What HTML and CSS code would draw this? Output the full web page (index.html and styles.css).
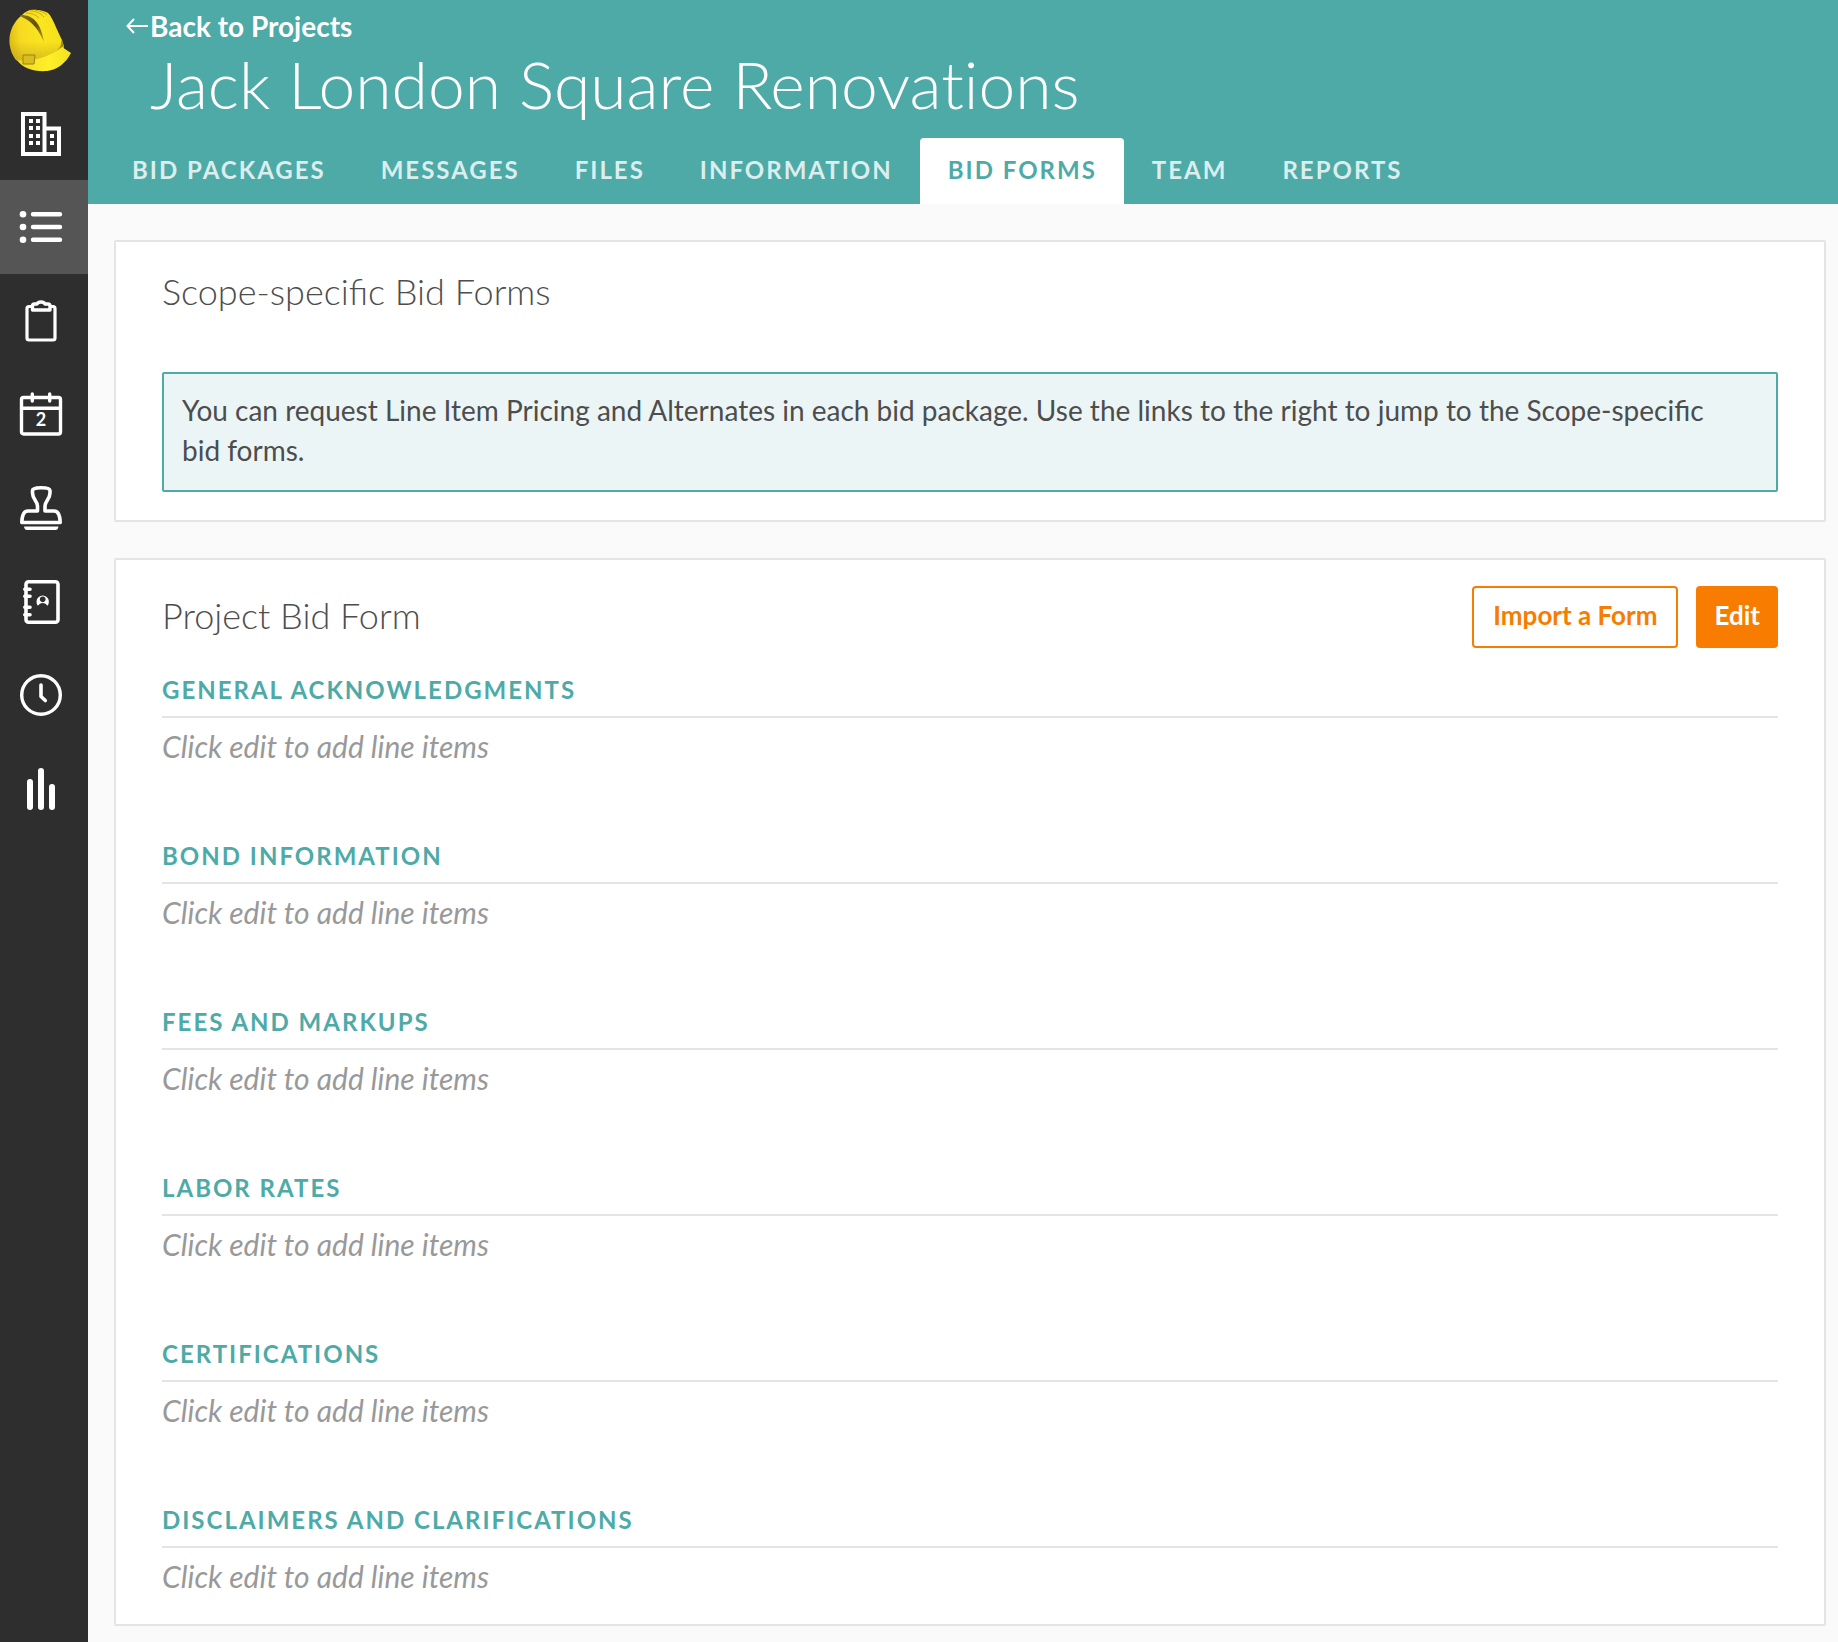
FILE: index.html
```html
<!DOCTYPE html>
<html lang="en">
<head>
<meta charset="utf-8">
<meta name="viewport" content="width=device-width, initial-scale=1">
<title>Jack London Square Renovations</title>
<link rel="stylesheet" href="styles.css">
</head>
<body>
<div class="app">
  <nav class="sidebar" aria-label="Main">
    <a class="logo" href="#" aria-label="Home">
      <svg width="64" height="64" viewBox="0 0 64 64" aria-hidden="true">
        <defs>
          <linearGradient id="shell" x1="0" y1="0.5" x2="1" y2="0.4">
            <stop offset="0" stop-color="#dcc012"/>
            <stop offset="0.2" stop-color="#f6da22"/>
            <stop offset="0.6" stop-color="#fae51e"/>
            <stop offset="1" stop-color="#f4e01a"/>
          </linearGradient>
          <linearGradient id="shade" x1="0" y1="0" x2="0" y2="1">
            <stop offset="0.6" stop-color="#b8941a" stop-opacity="0"/>
            <stop offset="1" stop-color="#b8941a" stop-opacity="0.55"/>
          </linearGradient>
          <linearGradient id="brim" x1="0" y1="0" x2="1" y2="0">
            <stop offset="0" stop-color="#f0d820"/>
            <stop offset="0.6" stop-color="#fff02a"/>
            <stop offset="1" stop-color="#f2e020"/>
          </linearGradient>
          <linearGradient id="groove" x1="0" y1="0" x2="1" y2="1">
            <stop offset="0" stop-color="#8a7612"/>
            <stop offset="0.5" stop-color="#5e5010"/>
            <stop offset="1" stop-color="#c0a414"/>
          </linearGradient>
        </defs>
        <path id="dome" fill="url(#shell)" d="M8 51C-2 38 -1 18 14 6C18 2 22 0 28 1C35 1 41 3 43 8C46 13 50 23 54 31L56 38L52 46C38 54 18 56 8 51Z"/>
        <path fill="url(#shade)" d="M8 51C-2 38 -1 18 14 6C18 2 22 0 28 1C35 1 41 3 43 8C46 13 50 23 54 31L56 38L52 46C38 54 18 56 8 51Z"/>
        <path fill="url(#groove)" d="M13 6C25 6 33 14 36 33C31 22 26 13 12 7Z"/>
        <path fill="none" stroke="#c9a916" stroke-width="1" d="M18 4C24 4 28 6 31 9M22 2C28 2 32 4 36 8M27 1C32 2 36 3 39 6"/>
        <path fill="#a58b15" d="M53 31C56 34 56 37 54 40L46 44C51 40 54 37 53 31Z"/>
        <path fill="url(#brim)" d="M9 51C24 53 42 48 54 38L63 44C58 54 49 61 39 62C26 63 14 59 9 51Z"/>
        <path fill="#d8bd1c" stroke="#9c8414" stroke-width="1" d="M15 46H27L26 55H15Z"/>
      </svg>
    </a>
    <a class="nav-item" href="#" aria-label="Company">
      <svg class="icon" viewBox="0 0 48 48" aria-hidden="true">
        <path stroke-linejoin="miter" d="M6 5H27.500V45H6ZM27.500 19.500H42V45H27.500"/>
        <path fill="currentColor" stroke="none" d="M12 10h4v4h-4zM19 10h4v4h-4zM12 17h4v4h-4zM19 17h4v4h-4zM12 25h4v4h-4zM19 25h4v4h-4zM12 32h4v4h-4zM19 32h4v4h-4zM33 25h4v4h-4zM33 32h4v4h-4z"/>
      </svg>
    </a>
    <a class="nav-item nav-item-active" href="#" aria-label="Projects" aria-current="page">
      <svg class="icon" viewBox="0 0 48 48" aria-hidden="true">
        <path stroke-width="4.4" d="M16 11.3H43M16 24H43M16 36.7H43"/>
        <g fill="currentColor" stroke="none">
          <circle cx="6" cy="11.3" r="3.3"/><circle cx="6" cy="24" r="3.3"/><circle cx="6" cy="36.7" r="3.3"/>
        </g>
      </svg>
    </a>
    <a class="nav-item" href="#" aria-label="Tasks">
      <svg class="icon" viewBox="0 0 48 48" aria-hidden="true">
        <path stroke-width="3.2" d="M14 9.5H12a2 2 0 0 0-2 2V41a2 2 0 0 0 2 2H36a2 2 0 0 0 2-2V11.500a2 2 0 0 0-2-2H34"/>
        <path stroke-width="3.4" d="M15.500 13V9a2 2 0 0 1 2-2H20Q21 5 24 5T28 7H31a2 2 0 0 1 2 2V13Z"/>
      </svg>
    </a>
    <a class="nav-item" href="#" aria-label="Calendar">
      <svg class="icon" viewBox="0 0 48 48" aria-hidden="true">
        <path stroke-width="3.400" d="M6.500 6.500H41.500a2 2 0 0 1 2 2V41a2 2 0 0 1-2 2H6.500a2 2 0 0 1-2-2V8.500a2 2 0 0 1 2-2ZM4.500 17.300H43.500M15.300 3V10M32.700 3V10"/>
        <text class="icon-date" x="24" y="35" text-anchor="middle">2</text>
      </svg>
    </a>
    <a class="nav-item" href="#" aria-label="Approvals">
      <svg class="icon" viewBox="0 0 48 48" aria-hidden="true">
        <path stroke-width="3.600" d="M20.500 26V21C20.500 16 15.500 14 15.500 8V5.500Q15.500 2.800 24 2.800T33 5.500V8C33 14 28 16 28 21V26H37C41 26 43 31 43.200 37.500H4.800C5 31 7 26 11 26Z"/>
        <path fill="currentColor" stroke="none" d="M7 41.500H41.500Q41 45 38.500 45H10Q7.500 45 7 41.500Z"/>
      </svg>
    </a>
    <a class="nav-item" href="#" aria-label="Contacts">
      <svg class="icon" viewBox="0 0 48 48" aria-hidden="true">
        <rect x="9" y="2.800" width="32" height="40.500" rx="2.500" stroke-width="3.600"/>
        <path stroke-width="3.600" d="M7.800 10.300H13M7.800 17.300H13M7.800 28.300H13M7.800 35.700H13"/>
        <path fill="currentColor" stroke="none" fill-rule="evenodd" d="M20.900 26.700A6.200 6.200 0 1 1 30.500 26.700L28.500 24.800Q25.700 23.200 22.900 24.800ZM25.700 17.400a2.900 2.900 0 1 0 .01 0Z"/>
      </svg>
    </a>
    <a class="nav-item" href="#" aria-label="History">
      <svg class="icon" viewBox="0 0 48 48" aria-hidden="true">
        <circle cx="24" cy="22" r="19.300" stroke-width="3.400"/>
        <path stroke-width="3.600" d="M24 12V23.500L28.300 27.500"/>
      </svg>
    </a>
    <a class="nav-item" href="#" aria-label="Analytics">
      <svg class="icon" viewBox="0 0 48 48" aria-hidden="true">
        <path stroke-width="6" d="M13 15V40M24 4V40M35 20V40"/>
      </svg>
    </a>
  </nav>

  <div class="page">
    <header class="header">
      <a class="back" href="#">
        <svg class="back-arrow" width="24" height="16" viewBox="0 0 24 16" aria-hidden="true"><path d="M22 8H2M8 1L1.500 8L8 15"/></svg>Back to Projects</a>
      <h1 class="title">Jack London Square Renovations</h1>
      <nav class="tabs" aria-label="Project">
        <a class="tab" href="#">Bid Packages</a>
        <a class="tab" href="#">Messages</a>
        <a class="tab" href="#">Files</a>
        <a class="tab" href="#">Information</a>
        <a class="tab tab-active" href="#" aria-current="page">Bid Forms</a>
        <a class="tab" href="#">Team</a>
        <a class="tab" href="#">Reports</a>
      </nav>
    </header>

    <main class="content">
      <section class="card">
        <div class="card-head card-head-top">
          <h2 class="card-title">Scope-specific Bid Forms</h2>
        </div>
        <p class="notice">You can request Line Item Pricing and Alternates in each bid package. Use the links to the right to jump to the Scope-specific bid forms.</p>
      </section>

      <section class="card">
        <div class="card-head">
          <h2 class="card-title">Project Bid Form</h2>
          <div class="actions">
            <button class="btn" type="button">Import a Form</button>
            <button class="btn btn-solid" type="button">Edit</button>
          </div>
        </div>
        <div class="form-sections">
          <section class="form-section">
            <h3 class="form-heading">General Acknowledgments</h3>
            <p class="empty">Click edit to add line items</p>
          </section>
          <section class="form-section">
            <h3 class="form-heading">Bond Information</h3>
            <p class="empty">Click edit to add line items</p>
          </section>
          <section class="form-section">
            <h3 class="form-heading">Fees and Markups</h3>
            <p class="empty">Click edit to add line items</p>
          </section>
          <section class="form-section">
            <h3 class="form-heading">Labor Rates</h3>
            <p class="empty">Click edit to add line items</p>
          </section>
          <section class="form-section">
            <h3 class="form-heading">Certifications</h3>
            <p class="empty">Click edit to add line items</p>
          </section>
          <section class="form-section">
            <h3 class="form-heading">Disclaimers and Clarifications</h3>
            <p class="empty">Click edit to add line items</p>
          </section>
        </div>
      </section>
    </main>
  </div>
</div>
</body>
</html>
```
FILE: styles.css
```css
:root {
  --teal: #4eaaa7;
  --orange: #f77c00;
  --ink: #4d4d4d;
  --muted: #999;
  --line: #e4e4e4;
}

* {
  box-sizing: border-box;
}

body {
  margin: 0;
  background: #fafafa;
  color: var(--ink);
  font-family: Lato, "Liberation Sans", sans-serif;
  font-size: 28px;
  font-weight: 400;
  line-height: 40px;
}

h1, h2, h3, p {
  margin: 0;
}

a {
  color: inherit;
  text-decoration: none;
}

.app {
  display: flex;
  min-height: 100vh;
}

/* Sidebar */

.sidebar {
  flex: none;
  width: 88px;
  background: #2e2e2e;
  color: #fff;
}

.logo {
  display: block;
  height: 86px;
  padding: 9px 8px;
}

.logo svg {
  display: block;
}

.nav-item {
  display: flex;
  align-items: center;
  height: 94px;
  padding-left: 17px;
}

.nav-item-active {
  background: #555;
}

.icon {
  width: 48px;
  height: 48px;
  fill: none;
  stroke: currentColor;
  stroke-width: 4;
  stroke-linecap: round;
  stroke-linejoin: round;
}

.icon-date {
  fill: currentColor;
  stroke: none;
  font-size: 18px;
  font-weight: 700;
}

/* Header */

.page {
  flex: 1;
  min-width: 0;
}

.header {
  padding-top: 6px;
  background: var(--teal);
  color: #fff;
}

.back {
  display: flex;
  align-items: center;
  padding-left: 38px;
  font-weight: 700;
}

.back-arrow {
  fill: none;
  stroke: currentColor;
  stroke-width: 2;
}

.title {
  padding-left: 62px;
  font-size: 66px;
  font-variant-ligatures: none;
  font-weight: 300;
  line-height: 76px;
}

.tabs {
  display: flex;
  padding: 16px 0 0 16px;
}

.tab {
  padding: 0 27px 2px 28px;
  border-radius: 4px 4px 0 0;
  color: #dbeeed;
  font-size: 24px;
  font-weight: 700;
  letter-spacing: 2px;
  line-height: 64px;
  text-transform: uppercase;
}

.tab-active {
  background: #fff;
  color: var(--teal);
}

/* Cards */

.content {
  display: flex;
  flex-direction: column;
  gap: 36px;
  padding: 36px 12px 16px 26px;
}

.card {
  padding: 26px 46px 28px;
  border: 2px solid var(--line);
  border-radius: 2px;
  background: #fff;
}

.card-head {
  display: flex;
  align-items: center;
  justify-content: space-between;
  min-height: 62px;
}

.card-head-top {
  align-items: flex-start;
}

.card-title {
  padding-bottom: 4px;
  font-size: 36px;
  font-weight: 300;
  line-height: 46px;
}

.notice {
  margin-top: 42px;
  padding: 16px 36px 20px 18px;
  border: 2px solid var(--teal);
  border-radius: 2px;
  background: #ebf5f6;
}

.actions {
  display: flex;
  gap: 18px;
}

.btn {
  height: 62px;
  padding: 0 19px 4px;
  border: 2px solid var(--orange);
  border-radius: 4px;
  background: #fff;
  color: var(--orange);
  font: inherit;
  font-size: 26px;
  font-weight: 700;
}

.btn-solid {
  padding: 0 16px 4px;
  background: var(--orange);
  color: #fff;
}

.form-sections {
  display: flex;
  flex-direction: column;
  gap: 68px;
  margin-top: 20px;
}

.form-heading {
  padding-bottom: 4px;
  border-bottom: 2px solid var(--line);
  color: var(--teal);
  font-size: 24px;
  font-weight: 700;
  letter-spacing: 2px;
  line-height: 44px;
  text-transform: uppercase;
}

.empty {
  padding-top: 8px;
  color: var(--muted);
  font-size: 30px;
  font-style: italic;
}
```
